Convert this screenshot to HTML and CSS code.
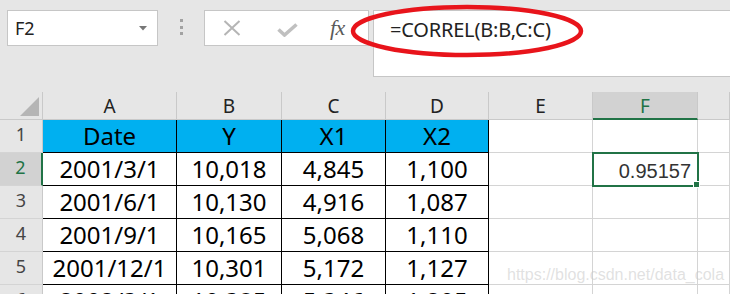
FILE: index.html
```html
<!DOCTYPE html>
<html>
<head>
<meta charset="utf-8">
<link rel="stylesheet" href="styles.css">
</head>
<body>
<div class="app">
  <div class="toolbar">
    <div class="namebox">
      <span class="ref">F2</span>
      <svg class="caret" width="8" height="5" viewBox="0 0 8 5"><path d="M0 0H8L4 4.5Z" fill="#777"/></svg>
    </div>
    <div class="grip"><i></i><i></i><i></i></div>
    <div class="fxbox">
      <svg class="ico-x" width="18" height="16" viewBox="0 0 18 16"><path d="M1.5 1L16.5 15M16.5 1L1.5 15" stroke="#b5b5b5" stroke-width="2" fill="none"/></svg>
      <svg class="ico-ok" width="21" height="14" viewBox="0 0 21 14"><path d="M1.5 6.5L7.5 12L19.5 1.5" stroke="#c0c0c0" stroke-width="3.6" fill="none"/></svg>
      <span class="fx">fx</span>
    </div>
    <div class="formula">=CORREL(B:B,C:C)</div>
  </div>

  <div class="sheet">
    <div class="hd corner"><span class="tri"></span></div>
    <div class="hd">A</div>
    <div class="hd">B</div>
    <div class="hd">C</div>
    <div class="hd">D</div>
    <div class="hd">E</div>
    <div class="hd act-col">F</div>
    <div class="hd"></div>

    <div class="rh">1</div>
    <div class="c t blue">Date</div>
    <div class="c t blue">Y</div>
    <div class="c t blue">X1</div>
    <div class="c t blue">X2</div>
    <div class="c"></div>
    <div class="c"></div>
    <div class="c"></div>

    <div class="rh act-row">2</div>
    <div class="c t">2001/3/1</div>
    <div class="c t">10,018</div>
    <div class="c t">4,845</div>
    <div class="c t">1,100</div>
    <div class="c"></div>
    <div class="c sel"><span class="num">0.95157</span></div>
    <div class="c"></div>

    <div class="rh">3</div>
    <div class="c t">2001/6/1</div>
    <div class="c t">10,130</div>
    <div class="c t">4,916</div>
    <div class="c t">1,087</div>
    <div class="c"></div>
    <div class="c"></div>
    <div class="c"></div>

    <div class="rh">4</div>
    <div class="c t">2001/9/1</div>
    <div class="c t">10,165</div>
    <div class="c t">5,068</div>
    <div class="c t">1,110</div>
    <div class="c"></div>
    <div class="c"></div>
    <div class="c"></div>

    <div class="rh">5</div>
    <div class="c t">2001/12/1</div>
    <div class="c t">10,301</div>
    <div class="c t">5,172</div>
    <div class="c t">1,127</div>
    <div class="c"></div>
    <div class="c"></div>
    <div class="c"></div>

    <div class="rh">6</div>
    <div class="c t">2002/3/1</div>
    <div class="c t">10,385</div>
    <div class="c t">5,346</div>
    <div class="c t">1,205</div>
    <div class="c"></div>
    <div class="c"></div>
    <div class="c"></div>
  </div>

  <svg class="ring" width="730" height="100" viewBox="0 0 730 100"><ellipse cx="467" cy="31" rx="114" ry="24" fill="none" stroke="#e8141b" stroke-width="4.5"/></svg>
  <div class="watermark">https://blog.csdn.net/data_cola</div>
</div>
</body>
</html>
```
FILE: styles.css
```css
html, body {
  margin: 0;
  padding: 0;
  background: #e6e6e6;
}
.app {
  position: relative;
  width: 730px;
  height: 294px;
  overflow: hidden;
  font-family: "Noto Sans", "Liberation Sans", sans-serif;
  color: #000;
}
.toolbar {
  height: 92px;
  box-sizing: border-box;
  padding-top: 10px;
  display: flex;
  align-items: flex-start;
}
.namebox {
  margin-left: 7px;
  width: 151px;
  height: 36px;
  box-sizing: border-box;
  border: 1px solid #c6c6c6;
  background: #fff;
  display: flex;
  align-items: center;
  justify-content: space-between;
  padding: 0 10px 0 7px;
}
.ref {
  font-size: 18px;
  color: #222;
  line-height: 24px;
}
.caret {
  display: block;
  margin-top: 1px;
}
.grip {
  width: 46px;
  height: 36px;
  box-sizing: border-box;
  padding-top: 9px;
  display: flex;
  flex-direction: column;
  align-items: center;
  gap: 3.5px;
}
.grip i {
  display: block;
  width: 3px;
  height: 3px;
  background: #a2a2a2;
}
.fxbox {
  width: 165px;
  height: 36px;
  box-sizing: border-box;
  border: 1px solid #c6c6c6;
  background: #fff;
  display: flex;
  align-items: center;
}
.ico-x {
  margin-left: 18px;
  display: block;
}
.ico-ok {
  margin-left: 36px;
  margin-top: 3px;
  display: block;
}
.fx {
  margin-left: 32px;
  font-family: "Liberation Serif", serif;
  font-style: italic;
  font-size: 22px;
  color: #5a5a5a;
  letter-spacing: -0.5px;
}
.formula {
  flex: 1;
  margin-left: 4px;
  height: 67px;
  box-sizing: border-box;
  border: 1px solid #c6c6c6;
  border-right: none;
  background: #fff;
  padding: 5px 0 0 16px;
  font-size: 20px;
  line-height: 27px;
  letter-spacing: -0.2px;
  color: #222;
}
.sheet {
  display: grid;
  grid-template-columns: 43px 134px 105px 104px 103px 104px 105px 32px;
  grid-template-rows: 28px repeat(6, 33px);
}
.hd {
  background: #e6e6e6;
  border-right: 1px solid #c9c9c9;
  border-bottom: 1px solid #c9c9c9;
  box-sizing: border-box;
  display: flex;
  align-items: center;
  justify-content: center;
  font-size: 19px;
  line-height: 26px;
  color: #222;
  padding-top: 1px;
}
.corner {
  position: relative;
}
.tri {
  position: absolute;
  right: 3px;
  bottom: 3px;
  width: 0;
  height: 0;
  border-left: 19px solid transparent;
  border-bottom: 19px solid #b5b5b5;
}
.act-col {
  background: #d2d2d2;
  color: #217346;
  border-bottom: 2px solid #217346;
}
.rh {
  background: #e6e6e6;
  border-right: 1px solid #c9c9c9;
  border-bottom: 1px solid #d4d4d4;
  box-sizing: border-box;
  display: flex;
  align-items: center;
  justify-content: center;
  font-size: 18px;
  line-height: 24px;
  color: #444;
  padding-bottom: 4px;
}
.act-row {
  background: #d2d2d2;
  color: #217346;
  border-right: 2px solid #217346;
}
.c {
  background: #fff;
  border-right: 1px solid #d4d4d4;
  border-bottom: 1px solid #d4d4d4;
  box-sizing: border-box;
  display: flex;
  align-items: center;
  justify-content: center;
  font-size: 24px;
  line-height: 32px;
  white-space: nowrap;
  overflow: hidden;
}
.t {
  border-right-color: #000;
  border-bottom-color: #000;
}
.blue {
  background: #00b0f0;
}
.sel {
  position: relative;
  overflow: visible;
  outline: 2px solid #217346;
  outline-offset: -1px;
  z-index: 1;
  justify-content: flex-end;
  align-items: flex-end;
  padding: 0 6px 2px 0;
}
.sel::after {
  content: "";
  position: absolute;
  right: -3px;
  bottom: -3px;
  width: 7px;
  height: 7px;
  box-sizing: border-box;
  background: #217346;
  border: 1px solid #fff;
}
.num {
  font-family: "Liberation Sans", Arial, sans-serif;
  font-size: 20px;
  line-height: 23px;
  color: #333;
}
.ring {
  position: absolute;
  left: 0;
  top: 0;
  pointer-events: none;
}
.watermark {
  position: absolute;
  left: 507px;
  top: 266px;
  font-family: "Liberation Sans", Arial, sans-serif;
  font-size: 16px;
  color: rgba(200, 200, 200, 0.55);
  white-space: nowrap;
}
```
